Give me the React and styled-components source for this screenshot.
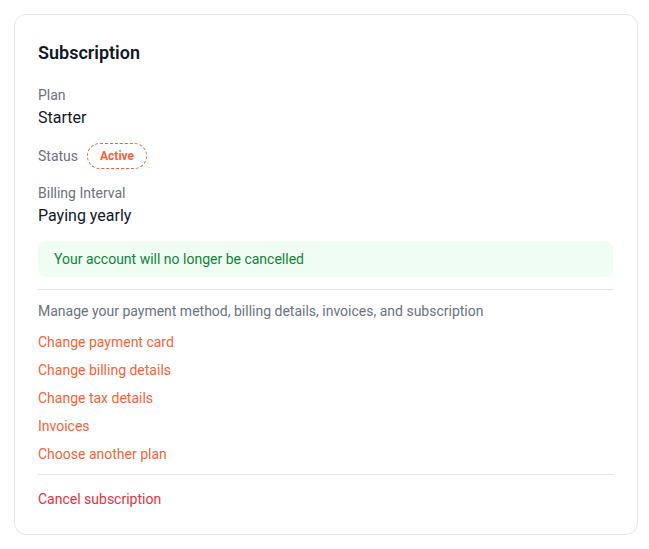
import React from "react";
import styled, { createGlobalStyle } from "styled-components";

const GlobalStyle = createGlobalStyle`
  body {
    margin: 0;
    background: #ffffff;
    font-family: Roboto, "Liberation Sans", Arial, sans-serif;
    -webkit-font-smoothing: antialiased;
  }
`;

const Page = styled.div`
  padding: 14px 12px 14px 14px;
`;

const Card = styled.section`
  width: 624px;
  box-sizing: border-box;
  border: 1px solid #e3e5e8;
  border-radius: 12px;
  padding: 24px 24px 25px 23px;
  background: #fff;
`;

const Title = styled.h2`
  margin: 0 0 18px;
  font-size: 18px;
  line-height: 28px;
  font-weight: 600;
  color: #111827;
`;

const Field = styled.div`
  margin-bottom: 13px;
`;

const Label = styled.div`
  font-size: 14px;
  line-height: 20px;
  color: #6b7280;
`;

const Value = styled.div`
  margin-top: 1px;
  font-size: 16px;
  line-height: 24px;
  color: #111827;
`;

const StatusRow = styled.div`
  display: flex;
  align-items: center;
  gap: 9px;
  margin-bottom: 14px;
`;

const Badge = styled.span`
  display: inline-flex;
  align-items: center;
  height: 26px;
  box-sizing: border-box;
  padding: 0 12px;
  border: 1px dashed #f0633a;
  border-radius: 999px;
  font-size: 12px;
  font-weight: 700;
  color: #f0633a;
`;

const Notice = styled.div`
  margin-top: 1px;
  padding: 8px 16px;
  border-radius: 8px;
  background: #effdf3;
  color: #15803d;
  font-size: 14px;
  line-height: 20px;
`;

const Divider = styled.hr`
  border: 0;
  border-top: 1px solid #e3e5e8;
  margin: ${(p) => p.$top}px 0 ${(p) => p.$bottom}px;
`;

const Hint = styled.p`
  margin: 0 0 11px;
  font-size: 14px;
  line-height: 20px;
  color: #6b7280;
`;

const Links = styled.nav`
  display: flex;
  flex-direction: column;
  align-items: flex-start;
  gap: 8px;
`;

const Action = styled.a`
  font-size: 14px;
  line-height: 20px;
  color: ${(p) => (p.$danger ? "#e3323f" : "#f2643a")};
  text-decoration: none;
  cursor: pointer;
`;

const links = [
  "Change payment card",
  "Change billing details",
  "Change tax details",
  "Invoices",
  "Choose another plan",
];

const App = () => {
  return (
    <>
      <GlobalStyle />
      <Page>
        <Card>
          <Title>Subscription</Title>

          <Field>
            <Label>Plan</Label>
            <Value>Starter</Value>
          </Field>

          <StatusRow>
            <Label>Status</Label>
            <Badge>Active</Badge>
          </StatusRow>

          <Field>
            <Label>Billing Interval</Label>
            <Value>Paying yearly</Value>
          </Field>

          <Notice>Your account will no longer be cancelled</Notice>

          <Divider $top={12} $bottom={11} />

          <Hint>
            Manage your payment method, billing details, invoices, and
            subscription
          </Hint>
          <Links>
            {links.map((label) => (
              <Action key={label}>{label}</Action>
            ))}
          </Links>

          <Divider $top={10} $bottom={14} />

          <Action $danger>Cancel subscription</Action>
        </Card>
      </Page>
    </>
  );
};

export default App;
